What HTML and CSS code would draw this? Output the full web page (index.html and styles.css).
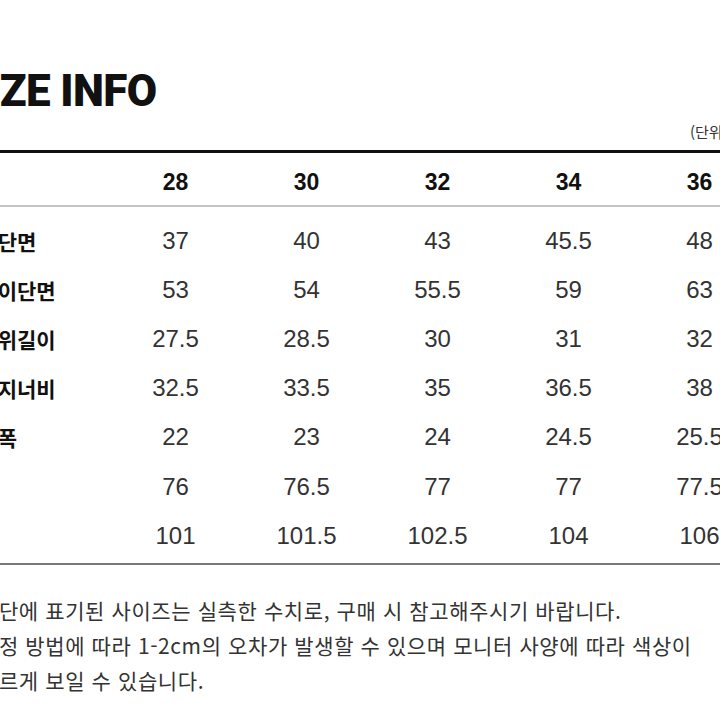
FILE: index.html
```html
<!DOCTYPE html>
<html lang="ko">
<head>
<meta charset="utf-8">
<title>SIZE INFO</title>
<link rel="stylesheet" href="styles.css">
</head>
<body>
<div class="page">
  <h1 class="title">SIZE INFO</h1>
  <div class="unit">(단위: cm)</div>
  <div class="table">
    <div class="row head">
      <div class="label"></div>
      <div class="cell">28</div><div class="cell">30</div><div class="cell">32</div><div class="cell">34</div><div class="cell">36</div>
    </div>
    <div class="body">
      <div class="row">
        <div class="label">허리단면</div>
        <div class="cell">37</div><div class="cell">40</div><div class="cell">43</div><div class="cell">45.5</div><div class="cell">48</div>
      </div>
      <div class="row">
        <div class="label">엉덩이단면</div>
        <div class="cell">53</div><div class="cell">54</div><div class="cell">55.5</div><div class="cell">59</div><div class="cell">63</div>
      </div>
      <div class="row">
        <div class="label">앞밑위길이</div>
        <div class="cell">27.5</div><div class="cell">28.5</div><div class="cell">30</div><div class="cell">31</div><div class="cell">32</div>
      </div>
      <div class="row">
        <div class="label">허벅지너비</div>
        <div class="cell">32.5</div><div class="cell">33.5</div><div class="cell">35</div><div class="cell">36.5</div><div class="cell">38</div>
      </div>
      <div class="row">
        <div class="label">밑단폭</div>
        <div class="cell">22</div><div class="cell">23</div><div class="cell">24</div><div class="cell">24.5</div><div class="cell">25.5</div>
      </div>
      <div class="row">
        <div class="label">인심</div>
        <div class="cell">76</div><div class="cell">76.5</div><div class="cell">77</div><div class="cell">77</div><div class="cell">77.5</div>
      </div>
      <div class="row">
        <div class="label">총장</div>
        <div class="cell">101</div><div class="cell">101.5</div><div class="cell">102.5</div><div class="cell">104</div><div class="cell">106</div>
      </div>
    </div>
  </div>
  <p class="note">상단에 표기된 사이즈는 실측한 수치로, 구매 시 참고해주시기 바랍니다.<br>측정 방법에 따라 1-2cm의 오차가 발생할 수 있으며 모니터 사양에 따라 색상이<br>다르게 보일 수 있습니다.</p>
</div>
</body>
</html>
```

FILE: styles.css
```css
html, body {
  margin: 0;
  padding: 0;
  background: #fff;
  overflow: hidden;
}

.page {
  margin-left: -40px;
  width: 805px;
  padding-top: 69px;
  font-family: "Liberation Sans", "Noto Sans CJK KR", sans-serif;
  color: #333;
}

.title {
  margin: 0;
  font-family: Roboto, "Liberation Sans", sans-serif;
  font-weight: 900;
  font-size: 44px;
  line-height: 44px;
  color: #111;
  letter-spacing: -0.6px;
}

.unit {
  margin-top: 9px;
  margin-bottom: 8px;
  padding-left: 730px;
  font-family: "Noto Sans CJK KR", sans-serif;
  font-size: 15px;
  line-height: 20px;
  color: #333;
  white-space: nowrap;
}

.table {
  border-top: 3px solid #111;
  border-bottom: 2px solid #777;
}

.row {
  display: grid;
  grid-template-columns: 150px repeat(5, 131px);
  align-items: center;
  height: 49.2px;
}

.row.head {
  height: 54px;
  padding-top: 7px;
  box-sizing: border-box;
  border-bottom: 2px solid #c4c4c4;
}

.body {
  padding: 9px 0 3px;
}

.label {
  margin-left: -1px;
  font-family: "Noto Sans CJK KR", sans-serif;
  font-weight: 700;
  font-size: 21px;
  color: #111;
  white-space: nowrap;
}

.cell {
  text-align: center;
  font-size: 24px;
  color: #333;
}

.head .cell {
  font-weight: 700;
  font-size: 23px;
  color: #111;
}

.note {
  margin: 28px 0 0;
  padding-left: 19px;
  font-family: "Noto Sans CJK KR", sans-serif;
  font-size: 21px;
  line-height: 35px;
  letter-spacing: 0.6px;
  color: #333;
  white-space: nowrap;
}
```
